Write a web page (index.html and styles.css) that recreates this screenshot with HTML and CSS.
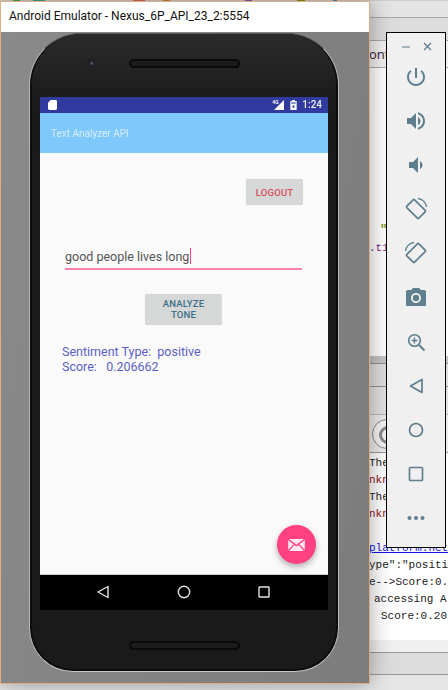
FILE: index.html
```html
<!DOCTYPE html>
<html lang="en">
  <head>
    <meta charset="UTF-8" />
    <title>Android Emulator</title>
    <link rel="stylesheet" href="styles.css">
  </head>
  <body>
    <div class="desktop">
      <div class="backdrop">
        <div class="band band-top"></div>
        <div class="band band-tab"></div>
        <div class="band band-code-tab"><span class="tab-text">ont</span></div>
        <div class="editor">
          <span class="quote">"</span>
          <span class="purple">.t1</span>
        </div>
        <div class="band band-split"></div>
        <div class="band band-grey"></div>
        <div class="band band-tools"></div>
        <div class="band band-search"><span class="search-ring"></span></div>
        <div class="console">
          <div class="line"><span class="dark">The</span></div>
          <div class="line"><span class="red">nkn</span></div>
          <div class="line"><span class="dark">The</span></div>
          <div class="line"><span class="red">nkn</span></div>
          <div class="line"></div>
          <div class="line"><span class="link">platform.net</span></div>
          <div class="line">ype":"positi</div>
          <div class="line">e--&gt;Score:0.</div>
          <div class="line indent-1">accessing A</div>
          <div class="line indent-2">Score:0.20</div>
        </div>
        <div class="band band-foot"></div>
        <div class="band band-foot2"></div>
      </div>

      <div class="emulator">
        <div class="titlebar">Android Emulator - Nexus_6P_API_23_2:5554</div>
        <div class="stage">
          <div class="phone">
            <div class="bezel-top">
              <span class="camera"></span>
              <span class="speaker"></span>
            </div>
            <div class="screen">
              <div class="statusbar">
                <svg class="sd-icon" viewBox="0 0 10 11"><path d="M3 0h5.500A1.500 1.500 0 0 1 10 1.500v8A1.500 1.500 0 0 1 8.500 11h-7A1.500 1.500 0 0 1 0 9.500V3z" fill="#fff"/></svg>
                <span class="status-right">
                  <span class="signal">
                    <span class="signal-type">4G</span>
                    <svg class="signal-icon" viewBox="0 0 12 10"><path d="M12 0V10H2z" fill="#fff"/></svg>
                  </span>
                  <svg class="battery-icon" viewBox="0 0 7 11"><path d="M2 0h3v1h1.500a.5.5 0 0 1 .5.500V10.500a.5.5 0 0 1-.5.500H.5a.5.5 0 0 1-.5-.5V1.500A.5.5 0 0 1 .5 1H2z" fill="#fff"/><path d="M1 2h5v2.500H1z" fill="#8f95cb"/><path d="M2.500 6h2v2.500h-2z" fill="#303a9f"/></svg>
                  <span class="clock">1:24</span>
                </span>
              </div>
              <div class="appbar">Text Analyzer API</div>
              <div class="content">
                <div class="logout-row">
                  <div class="btn btn-logout">LOGOUT</div>
                </div>
                <div class="tone-input">good people lives long<span class="caret"></span></div>
                <div class="analyze-row">
                  <div class="btn btn-analyze">ANALYZE<br>TONE</div>
                </div>
                <div class="result">
                  <div>Sentiment Type:&nbsp; positive</div>
                  <div>Score: &nbsp; 0.206662</div>
                </div>
                <div class="fab">
                  <svg viewBox="0 0 18 13" class="fab-icon"><path d="M1 0h16L9 6.200z" fill="#ffe6ef"/><path d="M0 1.200V12l5.800-6.300zM18 1.200V12l-5.800-6.300zM6.800 6.500L1 13h16l-5.800-6.500L9 8.200z" fill="#ffe6ef"/></svg>
                </div>
              </div>
              <div class="navbar">
                <svg class="nav-icon" viewBox="0 0 14 14"><path d="M12 1.500V12.500L2 7z" fill="none" stroke="#e4e4e4" stroke-width="1.400" stroke-linejoin="round"/></svg>
                <svg class="nav-icon" viewBox="0 0 14 14"><circle cx="7" cy="7" r="5.700" fill="none" stroke="#e4e4e4" stroke-width="1.400"/></svg>
                <svg class="nav-icon" viewBox="0 0 14 14"><rect x="2" y="2" width="10" height="10" rx=".6" fill="none" stroke="#e4e4e4" stroke-width="1.400"/></svg>
              </div>
            </div>
            <div class="bezel-bottom"><span class="speaker"></span></div>
          </div>
        </div>
      </div>

      <div class="toolbar">
        <div class="toolbar-head">
          <span class="tb-min"></span>
          <svg class="tb-close" viewBox="0 0 9 9"><path d="M1 1l7 7M8 1L1 8" stroke="#5f7e8e" stroke-width="1.300" fill="none"/></svg>
        </div>
        <svg class="tb-icon" viewBox="0 0 24 24"><path d="M13 3h-2v10h2V3zm4.830 2.170l-1.420 1.420C17.990 7.860 19 9.810 19 12c0 3.870-3.130 7-7 7s-7-3.130-7-7c0-2.190 1.010-4.140 2.580-5.420L6.170 5.170C4.230 6.820 3 9.260 3 12c0 4.970 4.030 9 9 9s9-4.030 9-9c0-2.740-1.230-5.180-3.170-6.830z"/></svg>
        <svg class="tb-icon" viewBox="0 0 24 24"><path d="M3 9v6h4l5 5V4L7 9H3zm13.500 3c0-1.770-1.020-3.290-2.500-4.030v8.050c1.480-.73 2.500-2.250 2.500-4.020zM14 3.230v2.060c2.890.86 5 3.540 5 6.710s-2.110 5.850-5 6.710v2.060c4.010-.91 7-4.490 7-8.770s-2.990-7.860-7-8.770z"/></svg>
        <svg class="tb-icon" viewBox="0 0 24 24"><path d="M18.500 12c0-1.770-1.020-3.290-2.500-4.030v8.050c1.480-.73 2.500-2.250 2.500-4.020zM5 9v6h4l5 5V4L9 9H5z"/></svg>
        <svg class="tb-icon tb-line" viewBox="0 0 24 24"><rect x="3.500" y="6.500" width="17" height="11" rx="1" transform="rotate(45 12 12)"/><path d="M14 1.500a10 10 0 0 1 8.500 8.500" stroke-width="1.300"/></svg>
        <svg class="tb-icon tb-line" viewBox="0 0 24 24"><rect x="3.500" y="6.500" width="17" height="11" rx="1" transform="rotate(-45 12 12)"/><path d="M10 1.500a10 10 0 0 0-8.500 8.500" stroke-width="1.300"/></svg>
        <svg class="tb-icon" viewBox="0 0 24 24"><circle cx="12" cy="13" r="3.200"/><path d="M9 3L7.170 5H4c-1.100 0-2 .9-2 2v13c0 .6.400 1 1 1h18c.6 0 1-.4 1-1V7c0-1.100-.9-2-2-2h-3.170L15 3H9zm3 15c-2.760 0-5-2.240-5-5s2.240-5 5-5 5 2.240 5 5-2.240 5-5 5z"/></svg>
        <svg class="tb-icon tb-line" viewBox="0 0 24 24"><circle cx="10.500" cy="10.500" r="5.800" stroke-width="1.600"/><path d="M15 15l5.500 5.500" stroke-width="2"/><path d="M10.500 7.500v6M7.500 10.500h6" stroke-width="1.400"/></svg>
        <svg class="tb-icon tb-line" viewBox="0 0 24 24"><path d="M18 5.500V18.500L6.500 12z" stroke-linejoin="round"/></svg>
        <svg class="tb-icon tb-line" viewBox="0 0 24 24"><circle cx="12" cy="12" r="6.500"/></svg>
        <svg class="tb-icon tb-line" viewBox="0 0 24 24"><rect x="5.500" y="5.500" width="13" height="13" rx="1"/></svg>
        <svg class="tb-icon" viewBox="0 0 24 24"><circle cx="5.500" cy="12" r="2"/><circle cx="12" cy="12" r="2"/><circle cx="18.500" cy="12" r="2"/></svg>
      </div>
    </div>
  </body>
</html>
```

FILE: styles.css
```css
* {
  box-sizing: border-box;
}

body {
  margin: 0;
  background-color: #e6e6e6;
  font-family: "Roboto", sans-serif;
}

.desktop {
  position: relative;
  width: 448px;
  height: 690px;
  overflow: hidden;
  background: linear-gradient(90deg, #d0d0d0 13px, #4fa65a 13px 20px, #d0d0d0 20px 33px, #3fa89a 33px 45px, #d0d0d0 45px 133px, #d86a5a 133px 145px, #d0d0d0 145px 163px, #c88a3c 163px 170px, #d0d0d0 170px 245px, #8a5aa0 245px 252px, #d0d0d0 252px 297px, #7c9a16 297px 305px, #d0d0d0 305px 333px, #4a88b0 333px 337px, #d0d0d0 337px) top / 100% 1px no-repeat, #e6e6e6;
}

/* stuff behind the emulator */
.backdrop {
  position: absolute;
  left: 300px;
  top: 1px;
  width: 148px;
  height: 689px;
  display: flex;
  flex-direction: column;
  font-family: "Liberation Mono", monospace;
  color: #222;
}

.band {
  flex: none;
  border-bottom: 1px solid #a8a8a8;
}

.band-top {
  height: 17px;
  background: #e4e4e4;
}

.band-tab {
  height: 23px;
  background: #dcdcdc;
}

.band-code-tab {
  height: 27px;
  background: #f0f0f0;
  padding: 4px 0 0 69px;
}

.tab-text {
  font-family: "Open Sans", sans-serif;
  font-size: 13px;
  color: #33202c;
}

.editor {
  flex: none;
  height: 288px;
  background: #fff;
  position: relative;
}

.quote {
  position: absolute;
  left: 80px;
  top: 156px;
  font-size: 12px;
  color: #7c9a16;
  font-weight: bold;
  line-height: 12px;
}

.purple {
  position: absolute;
  left: 69px;
  top: 174px;
  font-size: 11px;
  color: #7a1a8c;
}

.band-split {
  height: 8px;
  background: #c4c4c4;
  border-bottom-color: #909090;
}

.band-grey {
  height: 23px;
  background: #dedede;
  border-bottom-color: #909090;
}

.band-tools {
  height: 28px;
  background: #e2e2e2;
  border-bottom-color: #b8b8b8;
}

.band-search {
  height: 38px;
  background: #ececec;
  position: relative;
  border-bottom-color: #999;
}

.search-ring {
  position: absolute;
  left: 72px;
  top: 4px;
  width: 30px;
  height: 30px;
  border: 1px solid #888;
  border-radius: 50%;
  background: #f4f4f4;
}

.search-ring::after {
  content: "";
  position: absolute;
  left: 6px;
  top: 6px;
  width: 12px;
  height: 12px;
  border: 3px solid #8a8a8a;
  border-radius: 50%;
}

.console {
  flex: none;
  height: 187px;
  background: #fff;
  padding: 2px 0 0 69px;
  white-space: nowrap;
}

.line {
  height: 17px;
  line-height: 17px;
  font-size: 11px;
}

.dark {
  color: #222;
}

.red {
  color: #8c1010;
}

.link {
  color: #1414e0;
  text-decoration: underline;
}

.indent-1 {
  padding-left: 5px;
}

.indent-2 {
  padding-left: 12px;
}

.band-foot {
  height: 13px;
  background: #f0f0f0;
  border-bottom-color: #999;
}

.band-foot2 {
  height: 22px;
  background: #dcdcdc;
  border-bottom-color: #999;
}

/* emulator window */
.emulator {
  position: absolute;
  left: 0;
  top: 1px;
  width: 370px;
  height: 683px;
  border: 1px solid #e0ac82;
  background: #fff;
  box-shadow: 0 0 22px rgba(0, 0, 0, 0.35);
  display: flex;
  flex-direction: column;
}

.titlebar {
  flex: none;
  height: 30px;
  padding-left: 8px;
  line-height: 29px;
  font-family: "Roboto", sans-serif;
  font-size: 12px;
  color: #111;
  white-space: nowrap;
}

.stage {
  flex: 1;
  padding: 0 30px 0 28px;
  background: linear-gradient(100deg, #8a8a8a, #7c7c7c);
}

.phone {
  width: 310px;
  height: 639px;
  margin-top: 1px;
  padding: 0 10px;
  background: #1a1a1a;
  border: 1px solid #b8b8b8;
  border-top-color: #5a5a5a;
  border-bottom-color: #c8c8c8;
  border-radius: 52px 52px 44px 44px;
  box-shadow: inset 0 0 0 2px #0c0c0c;
  display: flex;
  flex-direction: column;
}

.bezel-top {
  flex: none;
  height: 63px;
  position: relative;
  display: flex;
  justify-content: center;
  align-items: flex-start;
  padding-top: 25px;
  margin: 0 -8px;
  border-radius: 50px 50px 0 0;
  background: linear-gradient(#2b2b2b, #1c1c1c);
}

.speaker {
  display: block;
  width: 111px;
  height: 9px;
  background: #1b1b1b;
  border: 2px solid #0a0a0a;
  border-radius: 5px;
}

.camera {
  position: absolute;
  left: 55px;
  top: 25px;
  width: 8px;
  height: 8px;
  border-radius: 50%;
  background: radial-gradient(circle at 60% 55%, #5a4a5a 0 1px, #23212c 2px, #1a1a20);
}

.screen {
  flex: none;
  width: 288px;
  height: 513px;
  display: flex;
  flex-direction: column;
  filter: blur(0.4px);
}

.statusbar {
  flex: none;
  height: 16px;
  padding: 3px 6px 0 8px;
  background: #303a9f;
  display: flex;
  justify-content: space-between;
}

.sd-icon {
  width: 9px;
  height: 10px;
}

.status-right {
  display: flex;
  align-items: flex-start;
  gap: 6px;
}

.signal {
  position: relative;
  width: 12px;
  height: 10px;
}

.signal-type {
  position: absolute;
  left: 0;
  top: -1px;
  font-size: 5px;
  font-weight: 700;
  line-height: 6px;
  color: #fff;
}

.signal-icon {
  display: block;
  width: 12px;
  height: 10px;
}

.battery-icon {
  width: 7px;
  height: 10px;
}

.clock {
  margin-left: -1px;
  margin-top: -1px;
  font-size: 10px;
  font-weight: 500;
  line-height: 12px;
  color: #f0f0f8;
}

.appbar {
  flex: none;
  height: 40px;
  padding-left: 11px;
  line-height: 41px;
  font-size: 10px;
  color: #d8eefc;
  background: #7ec8fb;
  box-shadow: 0 1px 2px rgba(0, 0, 0, 0.2);
  position: relative;
}

.content {
  flex: none;
  height: 422px;
  position: relative;
  background: #fafafa;
  border-bottom: 1px solid #cfcfcf;
  padding-top: 26px;
}

.logout-row {
  display: flex;
  justify-content: flex-end;
  padding-right: 25px;
}

.btn {
  background: #d6d7d7;
  border-radius: 2px;
  box-shadow: 0 0 1px rgba(0, 0, 0, 0.15);
  font-size: 9.500px;
  font-weight: 500;
  letter-spacing: 0.2px;
  text-align: center;
}

.btn-logout {
  width: 57px;
  height: 26px;
  line-height: 27px;
  color: #d9505c;
}

.tone-input {
  position: relative;
  margin: 38px 26px 0 25px;
  height: 27px;
  padding-top: 3px;
  font-size: 12.500px;
  line-height: 22px;
  color: #555;
  border-bottom: 2px solid #ff80a8;
}

.caret {
  display: inline-block;
  width: 1px;
  height: 16px;
  margin-left: 1px;
  vertical-align: -3px;
  background: #ff4081;
}

.analyze-row {
  display: flex;
  padding: 24px 0 0 105px;
}

.btn-analyze {
  width: 77px;
  height: 31px;
  padding-top: 4px;
  line-height: 11px;
  color: #3e7089;
}

.result {
  margin: 19px 0 0 22px;
  font-size: 12.500px;
  line-height: 15px;
  color: #5a5fc8;
}

.fab {
  position: absolute;
  left: 237px;
  top: 372px;
  width: 39px;
  height: 39px;
  border-radius: 50%;
  background: #ff4081;
  box-shadow: 0 3px 6px rgba(0, 0, 0, 0.3);
  display: flex;
  align-items: center;
  justify-content: center;
}

.fab-icon {
  width: 17px;
  height: 12px;
}

.navbar {
  flex: none;
  height: 35px;
  background: #000;
  display: flex;
  justify-content: space-between;
  padding: 10px 57px 0 56px;
}

.nav-icon {
  width: 14px;
  height: 14px;
}

.bezel-bottom {
  flex: 1;
  display: flex;
  justify-content: center;
  padding-top: 31px;
}

/* side toolbar */
.toolbar {
  position: absolute;
  left: 386px;
  top: 32px;
  width: 60px;
  height: 516px;
  background: #f0f0f0;
  border: 1px solid #000;
  display: flex;
  flex-direction: column;
  align-items: center;
  padding-top: 9px;
}

.toolbar-head {
  width: 100%;
  height: 10px;
  margin-bottom: 14px;
  padding: 0 13px 0 15px;
  display: flex;
  justify-content: space-between;
  align-items: center;
}

.tb-min {
  width: 8px;
  height: 2px;
  background: #a0b4bc;
}

.tb-close {
  width: 9px;
  height: 9px;
}

.tb-icon {
  flex: none;
  width: 24px;
  height: 24px;
  margin-bottom: 20.100px;
  fill: #5f7e8e;
  overflow: visible;
}

.tb-line {
  fill: none;
  stroke: #5f7e8e;
  stroke-width: 1.700;
}
```
